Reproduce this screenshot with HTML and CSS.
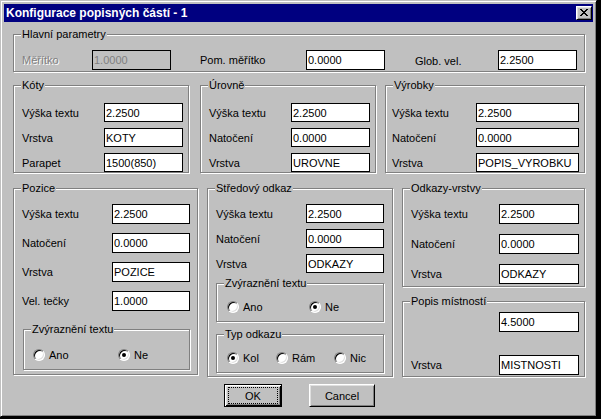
FILE: index.html
```html
<!DOCTYPE html>
<html lang="cs">
<head>
<meta charset="utf-8">
<title>Konfigurace popisných částí - 1</title>
<link rel="stylesheet" href="styles.css">
</head>
<body>
<div class="window">
  <div class="titlebar">
    <span class="title">Konfigurace popisných částí - 1</span>
    <span class="close"><svg width="8" height="7" viewBox="0 0 8 7" shape-rendering="crispEdges"><path d="M0 0h2v1h-2zM6 0h2v1h-2zM1 1h2v1h-2zM5 1h2v1h-2zM2 2h4v1h-4zM3 3h2v1h-2zM2 4h4v1h-4zM1 5h2v1h-2zM5 5h2v1h-2zM0 6h2v1h-2zM6 6h2v1h-2z" fill="#000"/></svg></span>
  </div>
  <div class="client">
    <div class="group g-main">
      <span class="legend">Hlavní parametry</span>
      <div class="main-row">
        <span class="label disabled">Měřítko</span>
        <span class="input input-disabled">1.0000</span>
        <span class="label main-label2">Pom. měřítko</span>
        <span class="input">0.0000</span>
        <span class="label main-label3">Glob. vel.</span>
        <span class="input">2.2500</span>
      </div>
    </div>

    <div class="row1">
      <div class="group g-koty">
        <span class="legend">Kóty</span>
        <div class="fields">
          <div class="frow"><span class="label">Výška textu</span><span class="input">2.2500</span></div>
          <div class="frow"><span class="label">Vrstva</span><span class="input">KOTY</span></div>
          <div class="frow"><span class="label">Parapet</span><span class="input">1500(850)</span></div>
        </div>
      </div>
      <div class="group g-urovne">
        <span class="legend">Úrovně</span>
        <div class="fields">
          <div class="frow"><span class="label">Výška textu</span><span class="input">2.2500</span></div>
          <div class="frow"><span class="label">Natočení</span><span class="input">0.0000</span></div>
          <div class="frow"><span class="label">Vrstva</span><span class="input">UROVNE</span></div>
        </div>
      </div>
      <div class="group g-vyrobky">
        <span class="legend">Výrobky</span>
        <div class="fields">
          <div class="frow"><span class="label">Výška textu</span><span class="input">2.2500</span></div>
          <div class="frow"><span class="label">Natočení</span><span class="input">0.0000</span></div>
          <div class="frow"><span class="label">Vrstva</span><span class="input">POPIS_VYROBKU</span></div>
        </div>
      </div>
    </div>

    <div class="row2">
      <div class="group g-pozice">
        <span class="legend">Pozice</span>
        <div class="fields">
          <div class="frow"><span class="label">Výška textu</span><span class="input">2.2500</span></div>
          <div class="frow"><span class="label">Natočení</span><span class="input">0.0000</span></div>
          <div class="frow"><span class="label">Vrstva</span><span class="input">POZICE</span></div>
          <div class="frow"><span class="label">Vel. tečky</span><span class="input">1.0000</span></div>
        </div>
        <div class="group sub sub-pozice">
          <span class="legend">Zvýraznění textu</span>
          <div class="radios">
            <span class="opt o-ano"><span class="radio"></span>Ano</span>
            <span class="opt"><span class="radio checked"></span>Ne</span>
          </div>
        </div>
      </div>

      <div class="group g-stred">
        <span class="legend">Středový odkaz</span>
        <div class="fields">
          <div class="frow"><span class="label">Výška textu</span><span class="input">2.2500</span></div>
          <div class="frow"><span class="label">Natočení</span><span class="input">0.0000</span></div>
          <div class="frow"><span class="label">Vrstva</span><span class="input">ODKAZY</span></div>
        </div>
        <div class="group sub sub-stred sub-zvyr">
          <span class="legend">Zvýraznění textu</span>
          <div class="radios">
            <span class="opt o-ano2"><span class="radio"></span>Ano</span>
            <span class="opt"><span class="radio checked"></span>Ne</span>
          </div>
        </div>
        <div class="group sub sub-stred sub-typ">
          <span class="legend">Typ odkazu</span>
          <div class="radios">
            <span class="opt o-kol"><span class="radio checked"></span>Kol</span>
            <span class="opt o-ram"><span class="radio"></span>Rám</span>
            <span class="opt"><span class="radio"></span>Nic</span>
          </div>
        </div>
      </div>

      <div class="rcol">
        <div class="group g-odkazy">
          <span class="legend">Odkazy-vrstvy</span>
          <div class="fields">
            <div class="frow"><span class="label">Výška textu</span><span class="input">2.2500</span></div>
            <div class="frow"><span class="label">Natočení</span><span class="input">0.0000</span></div>
            <div class="frow"><span class="label">Vrstva</span><span class="input">ODKAZY</span></div>
          </div>
        </div>
        <div class="group g-popis">
          <span class="legend">Popis místností</span>
          <div class="fields">
            <div class="frow"><span class="label"></span><span class="input">4.5000</span></div>
            <div class="frow"><span class="label">Vrstva</span><span class="input">MISTNOSTI</span></div>
          </div>
        </div>
      </div>
    </div>

    <div class="buttons">
      <span class="btn btn-ok">OK</span>
      <span class="btn btn-cancel">Cancel</span>
    </div>
  </div>
</div>
</body>
</html>
```

FILE: styles.css
```css
* { box-sizing: border-box; }
html, body { margin: 0; padding: 0; }
body {
  background: #000;
  width: 601px;
  height: 419px;
  overflow: hidden;
  font-family: "Liberation Sans", Arial, sans-serif;
  font-size: 11px;
  color: #000;
}
.window {
  width: 597px;
  height: 417px;
  background: #c0c0c0;
  border: 1px solid;
  border-color: #c0c0c0 #000 #000 #c0c0c0;
  box-shadow: inset 1px 1px #fff, inset -1px -1px #808080;
  padding: 3px;
}
.titlebar {
  height: 18px;
  background: #000080;
  color: #fff;
  display: flex;
  align-items: center;
  justify-content: space-between;
  padding: 0 1px 0 2px;
}
.title {
  font-weight: bold;
  font-size: 12px;
  line-height: 18px;
  white-space: nowrap;
}
.close {
  width: 16px;
  height: 14px;
  background: #c0c0c0;
  border: 1px solid;
  border-color: #fff #000 #000 #fff;
  box-shadow: inset 1px 1px #dfdfdf, inset -1px -1px #808080;
  padding: 2px 0 0 3px;
  display: block;
}
.close svg { display: block; }

.client { padding: 12px 7px 0 9px; }

.group {
  position: relative;
  border: 1px solid #808080;
  box-shadow: inset 1px 1px #fff, 1px 1px #fff;
}
.legend {
  position: absolute;
  top: -7px;
  left: 7px;
  padding: 0 1px;
  background: #c0c0c0;
  line-height: 13px;
  white-space: nowrap;
}
.label {
  flex: none;
  white-space: nowrap;
}
.input {
  flex: none;
  display: flex;
  align-items: center;
  border: 1px solid #000;
  background: #fff;
  padding-left: 1px;
  white-space: nowrap;
  overflow: hidden;
}
.disabled { color: #808080; text-shadow: 1px 1px 0 #fff; }
.input-disabled { background: #c0c0c0; color: #808080; }

/* Hlavní parametry */
.g-main { width: 572px; height: 38px; padding: 15px 0 0 8px; }
.main-row {
  display: grid;
  grid-template-columns: 70px 79px 135px 79px 113px 79px;
  align-items: center;
  height: 20px;
}
.main-row .input { height: 20px; }
.main-label2 { padding-left: 29px; }
.main-label3 { padding-left: 30px; padding-top: 2px; }

/* generic fields */
.fields { display: flex; flex-direction: column; }
.frow { display: flex; align-items: center; }

.row1 { display: flex; margin-top: 13px; }
.g-koty, .g-urovne { width: 176px; height: 88px; }
.g-urovne { margin-left: 11px; }
.g-vyrobky { width: 200px; height: 88px; margin-left: 9px; }
.row1 .fields { padding: 17px 0 0 8px; gap: 6px; }
.row1 .frow { height: 19px; }
.row1 .input { height: 19px; width: 79px; }
.row1 .label { width: 82px; }
.g-vyrobky .fields { padding-left: 6px; }
.g-vyrobky .label { width: 84px; }
.g-vyrobky .input { width: 103px; }

.row2 { display: flex; align-items: flex-start; margin-top: 15px; }
.g-pozice { width: 185px; height: 187px; padding: 15px 0 0 8px; }
.g-pozice .fields { gap: 9px; }
.g-pozice .frow { height: 20px; }
.g-pozice .label { width: 90px; }
.g-pozice .input { width: 78px; height: 20px; }
.sub-pozice { width: 167px; height: 41px; margin: 18px 0 0 1px; padding: 19px 0 0 9px; }
.o-ano { width: 85px; }

.g-stred { width: 186px; height: 189px; margin-left: 9px; padding: 15px 0 0 8px; }
.g-stred .fields { gap: 6px; }
.g-stred .frow { height: 19px; }
.g-stred .label { width: 90px; }
.g-stred .input { width: 78px; height: 19px; }
.sub-stred { width: 168px; height: 39px; padding: 17px 0 0 10px; }
.sub-zvyr { margin-top: 10px; }
.sub-typ { margin-top: 12px; }
.o-ano2 { width: 82px; }
.o-kol { width: 49px; }
.o-ram { width: 58px; }

.rcol { width: 183px; margin-left: 9px; display: flex; flex-direction: column; }
.g-odkazy { height: 99px; padding: 15px 0 0 8px; }
.g-odkazy .fields { gap: 10px; }
.g-popis { height: 76px; margin-top: 14px; padding: 10px 0 0 8px; }
.g-popis .fields { gap: 23px; }
.rcol .frow { height: 20px; }
.rcol .label { width: 88px; }
.rcol .input { width: 80px; height: 20px; }

/* radios */
.radios { display: flex; align-items: center; height: 12px; }
.opt { display: flex; align-items: center; white-space: nowrap; flex: none; }
.radio {
  position: relative;
  width: 12px;
  height: 12px;
  flex: none;
  border-radius: 50%;
  background: #fff;
  border: 1px solid;
  border-color: #808080 #fff #fff #808080;
  box-shadow: inset 1px 1px 0 #000, inset -1px -1px 0 #dfdfdf;
  margin-right: 4px;
}
.radio.checked::after {
  content: "";
  position: absolute;
  left: 3px;
  top: 3px;
  width: 4px;
  height: 4px;
  border-radius: 50%;
  background: #000;
}

/* buttons */
.buttons {
  display: flex;
  justify-content: center;
  gap: 27px;
  margin-top: 7px;
}
.btn {
  position: relative;
  height: 23px;
  display: flex;
  align-items: center;
  justify-content: center;
  background: #c0c0c0;
  border: 1px solid;
  border-color: #fff #000 #000 #fff;
  box-shadow: inset 1px 1px #dfdfdf, inset -1px -1px #808080;
}
.btn-ok {
  width: 58px;
  border-color: #000;
  box-shadow: inset 1px 1px #fff, inset -1px -1px #000, inset 2px 2px #dfdfdf, inset -2px -2px #808080;
}
.btn-ok::after {
  content: "";
  position: absolute;
  left: 3px;
  right: 3px;
  top: 2px;
  bottom: 2px;
  border: 1px dotted #000;
}
.btn-cancel { width: 66px; }
```
